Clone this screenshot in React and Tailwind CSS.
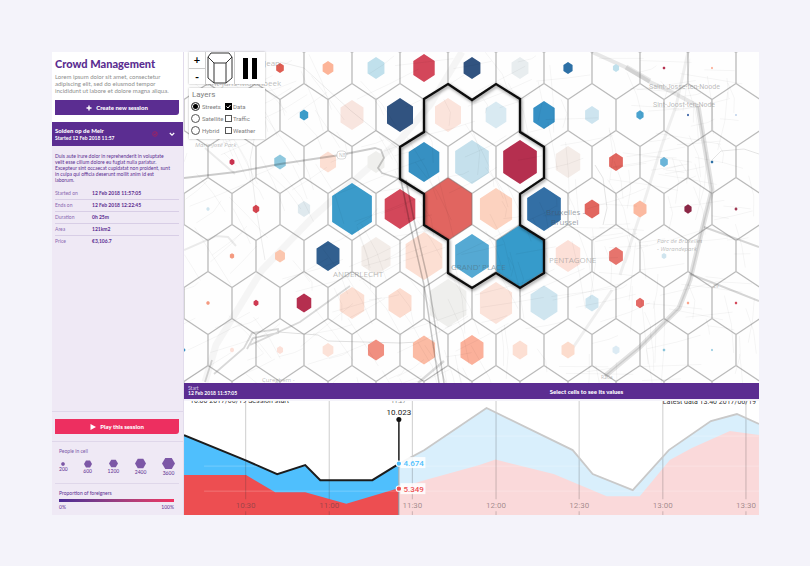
import React from "react";

const cellPath = (x, y, r) => {
  const w = r * 0.765;
  const h = r / 2;
  return `M${x} ${y - r}L${x + w} ${y - h}V${y + h}L${x} ${y + r}L${x - w} ${y + h}V${y - h}Z`;
};

// Each row: centre y, then [centre x, radius, colour] per measured cell.
const rows = [
  [68, [[280, 5, "#df5d52"], [328, 7, "#fcb498"], [376, 11, "#c0e0ec"], [424, 14, "#d3475a"], [472, 11, "#315380"], [520, 11, "#e8edef"], [568, 6, "#2d70a6"], [616, 4, "#bfe0ec"], [664, 1.6, "#b5304f"], [712, 1.2, "#fba68c"]]],
  [115, [[304, 5.5, "#3a9cc9"], [352, 15, "#f8e5df"], [400, 17, "#315380"], [448, 17, "#fbe4dc"], [496, 13.5, "#d9eaf2"], [544, 14, "#3690c4"], [592, 9, "#cde4ef"], [640, 4.7, "#4aa3cf"], [688, 1.3, "#4a6fae"], [736, 1, "#a9c3e4"]]],
  [162, [[232, 3.2, "#cb3350"], [280, 7.5, "#8fc8de"], [328, 10.5, "#fcdfd3"], [376, 11, "#efefed"], [424, 20, "#3690c2"], [472, 22, "#c5e0ec"], [520, 22, "#b52f4f"], [568, 16, "#f4ece8"], [616, 9, "#e1665f"], [664, 5, "#6ab4d8"], [712, 1.6, "#2d70a6"]]],
  [209, [[208, 2, "#cfe4ee"], [256, 4.2, "#d64650"], [304, 8, "#dfe9ee"], [352, 26, "#3b9bca"], [400, 20, "#d3475a"], [448, 31.5, "#e16560"], [496, 21, "#fcd2bf"], [544, 22, "#336fa5"], [592, 9.5, "#e1665f"], [640, 8.5, "#fbb9a0"], [688, 4.7, "#8b2746"], [736, 1.7, "#a03a55"]]],
  [256, [[232, 2.8, "#f49a80"], [280, 6.5, "#fbc6ae"], [328, 15, "#315f8f"], [376, 19, "#f3ede9"], [424, 24, "#fcdfd3"], [472, 22, "#55a9d3"], [520, 31, "#369bcb"], [568, 16, "#fce0d8"], [616, 9, "#e6746d"], [664, 3, "#cfe4ee"]]],
  [303, [[208, 2.1, "#f49a80"], [256, 3.2, "#cf3a52"], [304, 9.5, "#b52f4f"], [352, 16, "#fcdfd3"], [400, 15, "#fcdccf"], [448, 24, "#efefed"], [496, 21, "#fbe3da"], [544, 17.5, "#cfe5ef"], [592, 8.5, "#cfe5ef"], [640, 5.2, "#e46a66"], [688, 1.5, "#fba68c"], [736, 1.5, "#d44759"]]],
  [350, [[184, 1.7, "#3690c4"], [232, 2.5, "#fce0d8"], [280, 4, "#fce0d8"], [328, 7, "#fce2d8"], [376, 10.5, "#f08f80"], [424, 14.5, "#fbbba4"], [472, 15, "#fbb09a"], [520, 9.5, "#fcdfd3"], [568, 8.5, "#fcdccd"], [616, 4.5, "#dcebf4"], [664, 1.6, "#8fc8de"], [712, 1.2, "#8fc8de"]]],
];

const selection =
  "M448 84L472 100L496 84L520 99V132L544 147V178L520 194V225L544 240V273L520 288L496 273L472 288L448 273V240L424 225V194L400 179V147L424 132V99Z";

// Only the two upper edges and the left edge of each cell, so no edge is drawn twice.
const gridPath = Array.from({ length: 9 }, (_, r) =>
  Array.from({ length: 14 }, (_, c) => {
    const x = (r % 2 ? 136 : 160) + c * 48;
    const y = 21 + r * 47;
    return `M${x + 24} ${y - 15.5}L${x} ${y - 31.5}L${x - 24} ${y - 15.5}V${y + 15.5}`;
  }).join("")
).join("");

// Minor streets, spread evenly with a fixed-seed generator.
const streets = (() => {
  let s = 17;
  const rnd = () => (s = (s * 16807) % 2147483647) / 2147483647;
  let d = "";
  for (let i = 0; i < 330; i++) {
    const x = 184 + rnd() * 575;
    const y = 52 + rnd() * 330;
    const tilt = (rnd() < 0.5 ? 0.5 : 2.05) + rnd() * 0.5 + x / 900;
    const len = 16 + rnd() * 55;
    const mx = x + Math.cos(tilt) * len * 0.5 + rnd() * 5;
    const my = y + Math.sin(tilt) * len * 0.5;
    d += `M${x.toFixed(1)} ${y.toFixed(1)}L${mx.toFixed(1)} ${my.toFixed(1)}L${(x + Math.cos(tilt) * len).toFixed(1)} ${(y + Math.sin(tilt) * len).toFixed(1)}`;
  }
  return d;
})();

function CrowdMap() {
  return (
    <svg viewBox="184 52 575 331" className="block w-full" role="img" aria-label="Crowd density map">
      <defs>
        <filter id="shade" x="-10%" y="-10%" width="120%" height="120%">
          <feDropShadow dx="1" dy="1.5" stdDeviation="1.5" floodOpacity="0.45" />
        </filter>
      </defs>
      <rect x="184" y="52" width="575" height="331" fill="#fefefe" />
      <g fill="none" stroke="#000">
        <path d="M205 382L216 345L262 270L312 218L400 140L430 105L462 52" strokeWidth="7" opacity=".035" />
        <path d="M592 52L625 67L650 82L672 92L698 106" strokeWidth="4" opacity=".09" />
        <path d="M626 67L650 81" strokeWidth="5" opacity=".09" />
        <path d="M698 106L712 190L703 226L690 280L679 308L640 347L605 376" strokeWidth="5" opacity=".11" />
        <path d="M698 106L712 190L703 226L690 280L679 308L640 347L605 376" strokeWidth="1.5" opacity=".1" />
        <path d="M688 52L676 106L662 145L640 215L620 275M612 290L568 355" strokeWidth="3" opacity=".06" />
        <path d="M704 227L759 247M690 274L716 284L759 301" strokeWidth="2" opacity=".16" />
        <path d="M712 160L721 151L744 149L759 154M595 165L603 178L607 208L603 225" opacity=".1" />
        <path d="M214 374L244 348L252 333L278 329V333L253 338L247 349M250 345L300 322L350 286M205 382L212 360" strokeWidth="1.8" opacity=".15" />
        <path d="M278 332L318 335L328 341L400 343L435 341" opacity=".12" />
        <path d="M184 250L216 236L228 237L236 246M205 148L235 174" strokeWidth="2" opacity=".08" />
      </g>
      {rows.map(([y, cells]) =>
        cells.map(([x, r, color]) => <path key={`${x}-${y}`} d={cellPath(x, y, r)} fill={color} />)
      )}
      <path d={gridPath} fill="none" stroke="#777" strokeWidth="1.3" opacity=".5" />
      <path d={streets} fill="none" stroke="#000" strokeWidth=".8" opacity=".05" />
      <g fill="none" stroke="#000">
        <path d="M184 178L236 172L280 164L340 155L375 148L381 150L384 158L378 168L382 173L400 179" strokeWidth="1.8" opacity=".2" />
        <path d="M401 180L409 220L424 285L439 383M406 180L414 220L429 285L444 383" strokeWidth="1.5" opacity=".22" />
        <path d="M280 62L304 68L350 110L400 150M264 90L250 160L256 208L265 260" opacity=".07" />
        <path d="M444 361L418 383" strokeWidth="2.4" opacity=".14" />
      </g>
      <rect x="337" y="151" width="9" height="8" rx="3" fill="#fff" stroke="#ccc" strokeWidth=".7" />
      <g fontFamily="'Open Sans', sans-serif" fill="#8f8f8f" fillOpacity=".6">
        <text x="339" y="157" fontSize="5">N8</text>
        <text x="264" y="66" fontSize="8">Jean</text>
        <text x="205" y="86" fontSize="8">Sint-Jans-Molenbeek</text>
        <text x="195" y="147" fontSize="6" fontStyle="italic">Marie-José Park</text>
        <text x="649" y="89" fontSize="7" fontFamily="Roboto, sans-serif">Saint-Josse-ten-Noode</text>
        <text x="653" y="107" fontSize="7" fontFamily="Roboto, sans-serif">Sint-Joost-ten-Node</text>
        <text x="333" y="277" fontSize="8">ANDERLECHT</text>
        <text x="451" y="270" fontSize="8" fill="#4f6f80">GRAND’ PLACE</text>
        <text x="549" y="263" fontSize="8">PENTAGONE</text>
        <text x="657" y="243" fontSize="6" fontStyle="italic">Parc de Bruxelles</text>
        <text x="657" y="251" fontSize="6" fontStyle="italic">- Warandepark</text>
        <text x="262" y="382" fontSize="6">Cureghem -</text>
        <text x="601" y="379" fontSize="5">R20a</text>
        <text x="713" y="288" fontSize="5">29</text>
      </g>
      <g fontFamily="'Open Sans', sans-serif" fontSize="8" fill="#44505c" fillOpacity=".55">
        <text x="546" y="215">Bruxelles -</text>
        <text x="551" y="225">Brussel</text>
      </g>
      <path d={selection} fill="none" stroke="#111" strokeWidth="2.3" filter="url(#shade)" />
    </svg>
  );
}

const ticks = [[246.5, "10:30"], [330, "11:00"], [413, "11:30"], [496.5, "12:00"], [579.5, "12:30"], [663, "13:00"], [746, "13:30"]];

function Timeline() {
  return (
    <svg viewBox="185 401 574 114" className="block w-full bg-white" role="img" aria-label="Crowd over time">
      <path d="M399 464L425 450L487 408L573 450L593 474L633 490L669 450L711 421L737 414L759 424V515H399Z" fill="#d9effc" />
      <path d="M399 488L425 480L480 465L496 459.500L554 474L607 496H640L670 460L692 448L730 431L759 435V515H399Z" fill="#fad9da" />
      <path d="M185 435L246 460L278 474L306 465L321 480H373L399 464V515H185Z" fill="#4fbffd" />
      <path d="M185 475H247L276 492H306L347 503.500L399 488V515H185Z" fill="#ed4e51" />
      <path d="M205 436H759M205 466H759M205 491H759" stroke="#fff" strokeWidth=".7" opacity=".3" />
      <g stroke="#333" opacity=".2">
        {ticks.map(([x]) => <path key={x} d={`M${x} 401V499M${x} 511V515`} strokeWidth="1.2" />)}
      </g>
      <path d="M399 464L425 450L487 408L573 450L593 474L633 490L669 450L711 421L737 414L759 424" fill="none" stroke="#c9c9c9" strokeWidth="1.8" />
      <path d="M185 435L246 460L278 474L306 465L321 480H373L399 464" fill="none" stroke="#1c1c1c" strokeWidth="2" />
      <path d="M399.500 464V515" stroke="#555" strokeOpacity=".5" strokeWidth="1" />
      <path d="M399.500 420V463" stroke="#2a2a2a" strokeWidth="1.6" />
      <g fontFamily="Roboto, sans-serif" fontSize="8" textAnchor="middle">
        {ticks.map(([x, label]) => (
          <text key={x} x={x} y="508" fill="#4a3a40" fillOpacity=".5">{label}</text>
        ))}
        <text x="399.500" y="415" fill="#222">10.023</text>
        <text x="399" y="403" fontSize="6" fill="#777">11:27</text>
      </g>
      <g fontFamily="Roboto, sans-serif" fill="#333">
        <text x="191" y="403" fontSize="7">10:00 2017/06/19 Session start</text>
        <text x="663" y="404" fontSize="7">Latest data 13:40 2017/06/19</text>
      </g>
      <rect x="401" y="457" width="25" height="11" fill="#fff" fillOpacity=".85" />
      <rect x="401" y="483" width="25" height="11" fill="#fff" fillOpacity=".85" />
      <circle cx="399.500" cy="419.500" r="2.500" fill="#111" />
      <circle cx="399.500" cy="463.500" r="2.700" fill="#4fbffd" stroke="#fff" strokeWidth="1" />
      <circle cx="399.500" cy="488.500" r="2.700" fill="#ed4e51" stroke="#fff" strokeWidth="1" />
      <g fontFamily="Roboto, sans-serif" fontSize="8" fontWeight="500">
        <text x="404" y="466" fill="#4fbffd">4.674</text>
        <text x="404" y="492" fill="#ed4e51">5.349</text>
      </g>
    </svg>
  );
}

function MapControls() {
  return (
    <div className="absolute left-[5px] top-0 w-[76px] text-[#808080]">
      <div className="flex h-8 bg-white shadow-[0_0_2px_rgba(0,0,0,0.3)]">
        <div className="flex w-4 flex-col text-[11px] font-bold leading-none text-black">
          <button aria-label="Zoom in" className="flex-1 border-b border-[#ccc]">+</button>
          <button aria-label="Zoom out" className="flex-1">-</button>
        </div>
        <button aria-label="Toggle 3D columns" className="flex flex-1 items-center justify-center border-x border-[#ccc]">
          <svg viewBox="0 0 26 32" className="h-8 w-[26px]" fill="none" stroke="#333" strokeWidth="1">
            <path d="M4 1H22L25 5L19 11H7L1 5ZM1 5V26L7 31H19L25 26V5M7 11V31M19 11V31" />
          </svg>
        </button>
        <button aria-label="Pause" className="flex w-[30px] items-center justify-center gap-1">
          <span className="h-[21px] w-[5px] bg-black" />
          <span className="h-[21px] w-[5px] bg-black" />
        </button>
      </div>
      <fieldset className="mt-1 h-[51px] bg-white pl-[2px] pt-px font-[Roboto,sans-serif] shadow-[0_0_2px_rgba(0,0,0,0.3)]">
        <legend className="float-left w-full pl-px text-[8px] leading-[11px]">Layers</legend>
        <div className="grid w-full grid-cols-[34px_1fr] text-[6px]">
          {[["Streets", "Data"], ["Satellite", "Traffic"], ["Hybrid", "Weather"]].map(([base, layer], i) => (
            <React.Fragment key={base}>
              <label className="flex h-3 items-center gap-[2px]">
                <input
                  type="radio"
                  name="base"
                  defaultChecked={i === 0}
                  className="size-[9px] shrink-0 appearance-none rounded-full border border-[#555] bg-white checked:bg-black checked:shadow-[inset_0_0_0_1px_white]"
                />
                {base}
              </label>
              <label className="flex h-3 items-center gap-px">
                <input
                  type="checkbox"
                  defaultChecked={i === 0}
                  className="size-[7px] shrink-0 appearance-none border border-[#555] bg-white checked:border-black checked:bg-black"
                />
                {i === 0 && (
                  <svg viewBox="0 0 7 7" className="-ml-2 size-[7px] shrink-0" fill="none" stroke="#fff" strokeWidth="1">
                    <path d="M1.500 3.500L3 5L5.500 2" />
                  </svg>
                )}
                {layer}
              </label>
            </React.Fragment>
          ))}
        </div>
      </fieldset>
    </div>
  );
}

const details = [
  ["Started on", "12 Feb 2018 11:57:05"],
  ["Ends on", "12 Feb 2018 12:22:45"],
  ["Duration", "0h 25m"],
  ["Area", "121km2"],
  ["Price", "€3,106.7"],
];

const sizes = [["200", 4], ["600", 8], ["1200", 9], ["2400", 11], ["3600", 13]];

function Sidebar() {
  return (
    <aside className="flex w-[132px] shrink-0 flex-col border-r border-[#e2dcec] bg-[#efe9f5] text-[#5b2d91]">
      <div className="bg-white pb-[7px] pl-[3px] pr-1 pt-[4px]">
        <h1 className="whitespace-nowrap text-[11px] font-black leading-4">Crowd Management</h1>
        <p className="mt-px whitespace-nowrap text-[6px] leading-[7px] text-[#8d8d8d]">
          Lorem ipsum dolor sit amet, consectetur
          <br />
          adipiscing elit, sed do eiusmod tempor
          <br />
          incididunt ut labore et dolore magna aliqua.
        </p>
        <button className="mt-[6px] flex h-[15px] w-full items-center justify-center gap-1 rounded-br-[3px] bg-[#5b2d91] text-[6px] font-black text-white">
          <svg viewBox="0 0 6 6" className="size-[6px]" stroke="#fff" strokeWidth="1.400">
            <path d="M3 .5V5.500M.5 3H5.500" />
          </svg>
          Create new session
        </button>
      </div>
      <button className="flex h-6 items-center bg-[#5b2d91] pl-[3px] pr-2 text-left text-white">
        <span className="flex-1 text-[5px] font-bold leading-[7px]">
          <span className="block text-[6px] font-black leading-[8px]">Solden op de Meir</span>
          Started 12 Feb 2018 11:57
        </span>
        <svg viewBox="0 0 6 6" className="mr-[11px] size-[6px]" fill="none" stroke="#a5225e" strokeWidth=".8">
          <circle cx="3" cy="3" r="2.300" />
          <path d="M2 3L3 4L5 1" />
        </svg>
        <svg viewBox="0 0 6 6" className="size-[6px]" fill="none" stroke="#fff" strokeWidth="1.200">
          <path d="M.8 2L3 4.200L5.200 2" />
        </svg>
      </button>
      <p className="whitespace-nowrap px-[3px] pt-[7px] text-[5px] leading-[6px]">
        Duis aute irure dolor in reprehenderit in voluptate
        <br />
        velit esse cillum dolore eu fugiat nulla pariatur.
        <br />
        Excepteur sint occaecat cupidatat non proident, sunt
        <br />
        in culpa qui officia deserunt mollit anim id est
        <br />
        laborum.
      </p>
      <dl className="ml-[3px] mr-1 mt-[5px] divide-y divide-[#d8cee6] text-[5px]">
        {details.map(([k, v]) => (
          <div key={k} className="flex h-3 items-center">
            <dt className="w-[37px] text-[#8a68b0]">{k}</dt>
            <dd className="font-bold">{v}</dd>
          </div>
        ))}
      </dl>
      <div className="mt-auto border-y border-[#dfd7ea] py-[7px] pl-[3px] pr-1">
        <button className="flex h-[15px] w-full items-center justify-center gap-1 rounded-br-[3px] bg-[#ed2f60] text-[6px] font-black text-white">
          <svg viewBox="0 0 6 6" className="size-[6px]" fill="#fff">
            <path d="M.5 0L6 3L.5 6Z" />
          </svg>
          Play this session
        </button>
      </div>
      <section className="ml-[3px] mr-1 border-b border-[#dfd7ea] px-1 pb-[5px] pt-[6px] text-[5px] leading-[7px]">
        <h2 className="text-[#7b57a8]">People in cell</h2>
        <ul className="mt-px flex h-[22px] items-center justify-between">
          {sizes.map(([n, s]) => (
            <li key={n} className="flex flex-col items-center">
              <svg viewBox="0 0 14 12" style={{ width: s, height: s }} fill="#7c57a6">
                <path d="M3.500 0H10.500L14 6L10.500 12H3.500L0 6Z" />
              </svg>
              {n}
            </li>
          ))}
        </ul>
      </section>
      <section className="px-[7px] pb-[4px] pt-[6px] text-[5px] leading-[7px]">
        <h2>Proportion of foreigners</h2>
        <div className="mb-[2px] mr-[2px] mt-[2px] h-[3px] bg-linear-to-r from-[#4b2a95] to-[#f0305f]" />
        <div className="mr-[2px] flex justify-between">
          <span>0%</span>
          <span>100%</span>
        </div>
      </section>
    </aside>
  );
}

export default function App() {
  return (
    <div className="min-h-screen bg-[#f4f3fa] p-[52px] pr-[51px] font-[Lato,sans-serif]">
      <main className="flex w-full">
        <Sidebar />
        <div className="flex min-w-0 flex-1 flex-col">
          <div className="relative">
            <CrowdMap />
            <MapControls />
          </div>
          <div className="grid h-4 grid-cols-[2fr_3fr] items-center bg-[#5b2d91] text-white">
            <div className="pl-1 text-[5px] leading-[5px]">
              <div className="text-[#d9cbe9]">Start</div>
              <div className="font-bold">12 Feb 2018 11:57:05</div>
            </div>
            <div className="text-center text-[6px] font-black">Select cells to see its values</div>
          </div>
          <div className="pt-[2px]">
            <Timeline />
          </div>
        </div>
      </main>
    </div>
  );
}
